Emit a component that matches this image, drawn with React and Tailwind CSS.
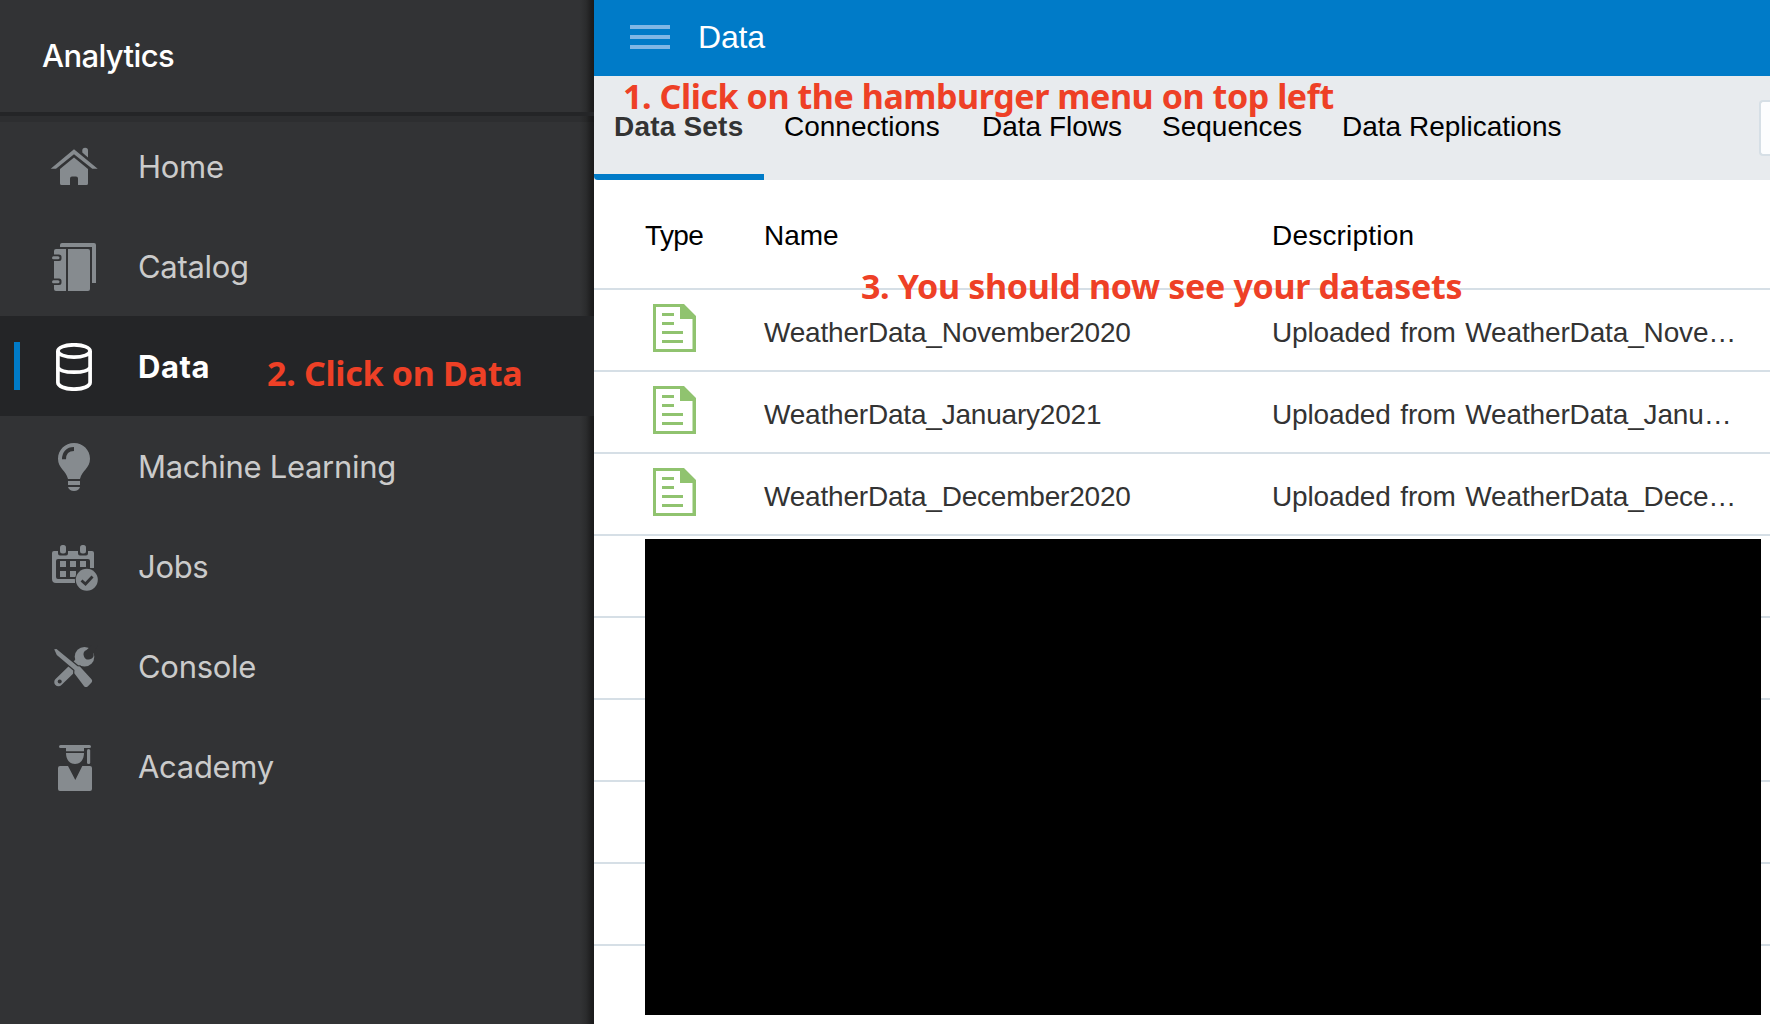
import React from "react";

const HomeIcon = () => (
  <>
    <path d="M.7 25.7 24 6.3l23.7 19.4h-5.4L24 11.2 6 25.7z" />
    <path d="M24 14.6 38 26v14.4a1.6 1.6 0 0 1-1.6 1.6H28v-6.500a2 2 0 0 0-2-2h-4a2 2 0 0 0-2 2V42h-8.400a1.600 1.600 0 0 1-1.600-1.600V26z" />
    <path d="M32.300 9.500V7.500a2.850 2.850 0 0 1 5.700 0v7z" />
  </>
);

const CatalogIcon = () => (
  <>
    <path d="M10 4V2a2 2 0 0 1 2-2h32a2 2 0 0 1 2 2v38h-4V4z" />
    <path d="M6 6h10v42H6a2 2 0 0 1-2-2v-4h5a2.500 2.500 0 0 0 2.500-2.500v-1.500a2.500 2.500 0 0 0-2.500-2.500H4V18h5a2.500 2.500 0 0 0 2.500-2.500V14A2.500 2.500 0 0 0 9 11.500H4V8a2 2 0 0 1 2-2z" />
    <path d="M18 6h20a2 2 0 0 1 2 2v38a2 2 0 0 1-2 2H18z" />
    <rect x="2" y="13.200" width="7.500" height="3" rx="1.500" />
    <rect x="2" y="37.300" width="7.500" height="3" rx="1.500" />
  </>
);

const DataIcon = () => (
  <g fill="none" stroke="currentColor" strokeWidth="3.700">
    <ellipse cx="24" cy="8" rx="16.100" ry="6.200" />
    <path d="M7.900 8v31.500c0 3.700 7.200 6.700 16.100 6.700s16.100-3 16.100-6.700V8" />
    <path d="M7.900 24.500c1.500 3.200 7.600 4.700 16.100 4.700s14.600-1.500 16.100-4.700" />
  </g>
);

const BulbIcon = () => (
  <>
    <path d="M24 0c9 0 16 7 16 15.800 0 9.500-8 11.500-10 20.200H18C16 27.300 8 25.300 8 15.800 8 7 15 0 24 0z" />
    <path d="M18 38h12v4H18zM18 44h12c-.8 2.600-3 4-6 4s-5.200-1.400-6-4z" />
    <path d="M14 16.300C14 10 17.500 6 24 6" fill="none" stroke="#323335" strokeWidth="4" />
  </>
);

const JobsIcon = () => (
  <>
    <path fillRule="evenodd" d="M4 8h4v2.500a2 2 0 0 0 2 2h6a2 2 0 0 0 2-2V8h10v2.500a2 2 0 0 0 2 2h6a2 2 0 0 0 2-2V8h4a2 2 0 0 1 2 2v15h-4v-7a2 2 0 0 0-2-2H8a2 2 0 0 0-2 2v16a2 2 0 0 0 2 2h17v4H6a4 4 0 0 1-4-4V10a2 2 0 0 1 2-2z" />
    <rect x="10" y="2" width="6" height="8.500" rx="2.500" />
    <rect x="30" y="2" width="6" height="8.500" rx="2.500" />
    <path d="M10 18h6v6h-6zM20 18h6v6h-6zM30 18h6v6h-6zM10 28h6v6h-6zM20 28h6v6h-6z" />
    <circle cx="36.800" cy="36.800" r="11.900" fill="#323335" />
    <circle cx="36.800" cy="36.800" r="11" />
    <path d="m31.500 37.500 4 3.500 7-7.500" fill="none" stroke="#323335" strokeWidth="2.800" />
  </>
);

const ConsoleIcon = () => (
  <>
    <path d="M8.500 39 25 23 34 14" fill="none" stroke="currentColor" strokeWidth="8.500" strokeLinecap="round" />
    <circle cx="34.500" cy="13.700" r="9.800" />
    <path d="M48 2 43.500 10.500a5 5 0 1 1-7-3.600L42 2z" fill="#323335" />
    <circle cx="9.700" cy="38.600" r="2" fill="#323335" />
    <path d="M4.200 6.200 6.500 6 27.500 23.300l2.300.200 11.700 12.700c1 1.200.8 2.600-.2 3.600l-3.600 3.600c-1.200 1-2.600.8-3.600-.2L24.300 30.300l.200-3.200L6.800 12z" stroke="#323335" strokeWidth="2.500" paintOrder="stroke" />
  </>
);

const AcademyIcon = () => (
  <>
    <path d="M10.500 2h29a1.500 1.500 0 0 1 0 3H34v3.200H16V5h-5.500a1.500 1.500 0 0 1 0-3z" />
    <path d="M16 10h18c0 6.500-3.500 11-9 11s-9-4.500-9-11z" />
    <rect x="37" y="6" width="3.200" height="15" rx="1.600" />
    <path d="M10 23h8l7.300 14L32.300 23H40a2 2 0 0 1 2 2v21a2 2 0 0 1-2 2H10a2 2 0 0 1-2-2V25a2 2 0 0 1 2-2z" />
  </>
);

const NAV = [
  { label: "Home", Icon: HomeIcon },
  { label: "Catalog", Icon: CatalogIcon },
  { label: "Data", Icon: DataIcon, active: true },
  { label: "Machine Learning", Icon: BulbIcon },
  { label: "Jobs", Icon: JobsIcon },
  { label: "Console", Icon: ConsoleIcon },
  { label: "Academy", Icon: AcademyIcon },
];

const TABS = [
  { label: "Connections", width: "w-[198px]" },
  { label: "Data Flows", width: "w-[180px]" },
  { label: "Sequences", width: "w-[180px]" },
  { label: "Data Replications", width: "w-[260px]" },
];

const ROWS = [
  ["WeatherData_November2020", "Uploaded from WeatherData_Nove…"],
  ["WeatherData_January2021", "Uploaded from WeatherData_Janu…"],
  ["WeatherData_December2020", "Uploaded from WeatherData_Dece…"],
];

const EMPTY_ROWS = [0, 1, 2, 3, 4, 5];

function NavItem({ label, Icon, active }) {
  return (
    <li className={active ? "flex h-[100px] items-center bg-[#242527] pt-0.5 text-white" : "flex h-[100px] items-center pt-0.5 text-[#868b8f]"}>
      <span className={active ? "mb-0.5 ml-3.5 h-12 w-1.5 bg-[#007bc8]" : "ml-3.5 h-12 w-1.5"} />
      <svg className="ml-[30px] size-12" viewBox="0 0 48 48" fill="currentColor">
        <Icon />
      </svg>
      <span className={active ? "ml-10 text-[31px] font-bold tracking-[0.5px] text-white" : "ml-10 text-[31px] tracking-[-0.3px] text-[#cbcbcb]"}>
        {label}
      </span>
    </li>
  );
}

function DocumentIcon() {
  return (
    <svg className="h-12 w-[43px]" viewBox="0 0 43 48" fill="#90c36f">
      <path fillRule="evenodd" d="M0 0h31l12 12v36H0zM3 3v42h36.500V15H27V3z" />
      <path d="M9 9h12v3H9zM9 18h12v3H9zM9 27h21v3H9zM9 36h21v3H9z" />
    </svg>
  );
}

function Note({ className, children }) {
  return (
    <p className={`absolute z-10 whitespace-nowrap font-['Noto_Sans',sans-serif] text-[34px] leading-[46px] font-bold text-[#ee4026] ${className}`}>
      {children}
    </p>
  );
}

export default function App() {
  return (
    <div className="relative flex h-[1024px] w-[1770px] overflow-hidden bg-white">
      <aside className="w-[594px] shrink-0 bg-[linear-gradient(to_left,#1a1a1b_0,#1e1e1f_3px,#2b2c2d_8px,#323335_14px)] font-['Inter',sans-serif]">
        <h1 className="flex h-28 items-center pl-[42px] text-[31px] font-medium tracking-[-0.6px] text-white">Analytics</h1>
        <div className="h-1 bg-[#242527]" />
        <ul className="bg-[linear-gradient(to_bottom,#0000001a_6px,transparent_6px)]">
          {NAV.map((item) => (
            <NavItem key={item.label} {...item} />
          ))}
        </ul>
      </aside>

      <main className="min-w-0 flex-1 font-['Liberation_Sans',sans-serif] text-[28px]">
        <header className="flex h-[76px] items-center bg-[#007bc8] pb-0.5 pl-9">
          <div className="flex w-10 flex-col gap-1.5">
            <span className="h-1 bg-[#80b7e5]" />
            <span className="h-1 bg-[#80b7e5]" />
            <span className="h-1 bg-[#80b7e5]" />
          </div>
          <span className="ml-7 text-[32px] tracking-[-0.2px] text-white">Data</span>
        </header>

        <nav className="flex h-[104px] overflow-hidden bg-[#e8ebee] text-black">
          <div className="w-[170px] shrink-0 rounded-bl border-b-6 border-[#007bc8] pt-[30px] pl-5 leading-[42px] font-bold tracking-[0.2px] whitespace-nowrap text-[#333]">
            Data Sets
          </div>
          {TABS.map((tab) => (
            <div key={tab.label} className={`shrink-0 pt-[30px] pl-5 leading-[42px] whitespace-nowrap ${tab.width}`}>
              {tab.label}
            </div>
          ))}
          <div className="mt-6 ml-auto h-14 w-[11px] shrink-0 rounded-l-sm border-2 border-r-0 border-[#d6dfe6] bg-[#fcfdfe]" />
        </nav>

        <section>
          <div className="flex h-[110px] items-center border-b-2 border-[#d6dfe6] pt-1 text-black">
            <span className="w-[119px] shrink-0 pl-[51px] tracking-[-0.6px]">Type</span>
            <span className="w-[508px] shrink-0 pl-[51px]">Name</span>
            <span className="pl-[51px] tracking-[0.2px]">Description</span>
          </div>
          {ROWS.map(([name, description]) => (
            <div key={name} className="flex h-[82px] items-center border-b-2 border-[#d6dfe6] text-[#333]">
              <div className="w-[170px] shrink-0 pb-1 pl-[59px]">
                <DocumentIcon />
              </div>
              <span className="w-[508px] shrink-0 pt-1.5 tracking-[-0.2px]">{name}</span>
              <span className="pt-1.5 tracking-[-0.15px] [word-spacing:2px] whitespace-nowrap">{description}</span>
            </div>
          ))}
          {EMPTY_ROWS.map((row) => (
            <div key={row} className="h-[82px] border-b-2 border-[#d6dfe6]" />
          ))}
        </section>
      </main>

      <div className="absolute top-[539px] left-[645px] h-[476px] w-[1116px] bg-black" />
      <Note className="top-[73px] left-[623px] tracking-[-0.43px]">1. Click on the hamburger menu on top left</Note>
      <Note className="top-[350px] left-[267px] tracking-[-0.3px]">2. Click on Data</Note>
      <Note className="top-[263px] left-[861px] tracking-[-0.33px]">3. You should now see your datasets</Note>
    </div>
  );
}
